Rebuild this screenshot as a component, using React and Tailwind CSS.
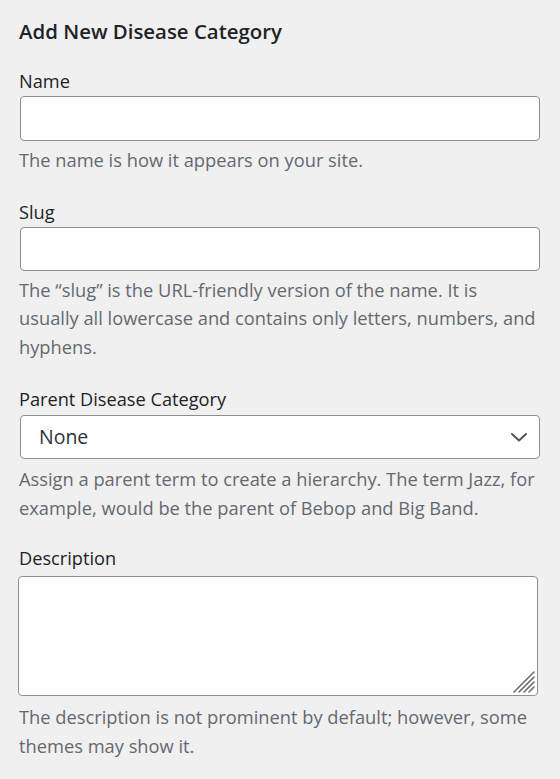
import React from "react";

function Label({ children }) {
  return (
    <label className="block text-[18.2px] leading-[24px] text-[#1d2327]">{children}</label>
  );
}

function Help({ children, className = "" }) {
  return (
    <p className={"text-[18.3px] leading-[28.5px] text-[#646970] " + className}>{children}</p>
  );
}

export default function App() {
  return (
    <div
      className="min-h-screen w-[560px] bg-[#f0f0f1] px-[19px] pt-[17px]"
      style={{ fontFamily: '"Open Sans", "Noto Sans", sans-serif' }}
    >
      <h2 className="text-[20.4px] leading-[28px] font-semibold text-[#1d2327]">
        Add New Disease Category
      </h2>

      <div className="mt-[24px]">
        <Label>Name</Label>
        <input
          type="text"
          className="mt-[3px] ml-[1px] block h-[45px] w-[520px] rounded-[4px] border border-[#8c8f94] bg-white"
        />
        <Help className="mt-[5px]">The name is how it appears on your site.</Help>
      </div>

      <div className="mt-[25px]">
        <Label>Slug</Label>
        <input
          type="text"
          className="mt-[3px] ml-[1px] block h-[44px] w-[520px] rounded-[4px] border border-[#8c8f94] bg-white"
        />
        <Help className="mt-[5px]">
          The “slug” is the URL-friendly version of the name. It is usually all lowercase and
          contains only letters, numbers, and hyphens.
        </Help>
      </div>

      <div className="mt-[26px]">
        <Label>Parent Disease Category</Label>
        <div className="mt-[4px] ml-[1px] flex h-[44px] w-[520px] items-center justify-between rounded-[4px] border border-[#8c8f94] bg-white pl-[18px] pr-[11px]">
          <span className="text-[19.5px] text-[#2c3338]">None</span>
          <svg width="18" height="18" viewBox="0 0 18 18" fill="none">
            <path d="M2 6 L9 12.5 L16 6" stroke="#50575e" strokeWidth="2" strokeLinecap="round" strokeLinejoin="round" />
          </svg>
        </div>
        <Help className="mt-[6px]">
          Assign a parent term to create a hierarchy. The term Jazz, for example, would be the
          parent of Bebop and Big Band.
        </Help>
      </div>

      <div className="mt-[24px]">
        <Label>Description</Label>
        <div className="relative mt-[6px] -ml-[1px] h-[120px] w-[520px]">
          <textarea className="block h-full w-full resize-none rounded-[4px] border border-[#8c8f94] bg-white" />
          <svg
            className="absolute right-[2px] bottom-[2px]"
            width="24"
            height="24"
            viewBox="0 0 24 24"
          >
            <g stroke="#6b6b6b" strokeWidth="1.6" strokeLinecap="round">
              <line x1="2" y1="22" x2="22" y2="2" />
              <line x1="7" y1="22" x2="22" y2="7" />
              <line x1="12" y1="22" x2="22" y2="12" />
              <line x1="17" y1="22" x2="22" y2="17" />
            </g>
          </svg>
        </div>
        <Help className="mt-[7px]">
          The description is not prominent by default; however, some themes may show it.
        </Help>
      </div>
    </div>
  );
}
